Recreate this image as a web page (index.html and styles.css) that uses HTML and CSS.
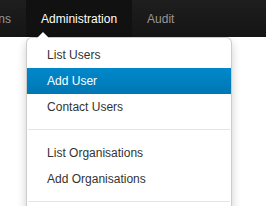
FILE: index.html
```html
<!DOCTYPE html>
<html lang="en">

<head>
    <meta charset="UTF-8">
    <meta name="viewport" content="width=device-width, initial-scale=1.0">
    <title>Administration</title>
    <link rel="stylesheet" href="styles.css">
</head>

<body>
    <!-- top navbar -->
    <div class="navbar">
        <ul class="nav">
            <li><a href="#">Organisations</a></li>
            <li class="dropdown active">
                <a href="#">Administration</a>

                <!-- open dropdown -->
                <ul class="dropdown-menu">
                    <li><a href="#">List Users</a></li>
                    <li class="hover"><a href="#">Add User</a></li>
                    <li><a href="#">Contact Users</a></li>
                    <li class="divider"></li>
                    <li><a href="#">List Organisations</a></li>
                    <li><a href="#">Add Organisations</a></li>
                    <li class="divider"></li>
                </ul>
            </li>
            <li><a href="#">Audit</a></li>
        </ul>
    </div>
</body>

</html>
```

FILE: styles.css
```css
body {
    margin: 0;
    min-height: 100vh;
    overflow: hidden;
    font-family: 'Liberation Sans', Arial, sans-serif;
    font-size: 12px;
    line-height: 20px;
    color: #333;
    background: #fff;
}

/* navbar */
.navbar {
    height: 37px;
    background: linear-gradient(to bottom, #1e1e1e, #151515);
}

.nav {
    list-style: none;
    margin: 0 0 0 -78px;
    padding: 0;
    display: flex;
}

.nav > li {
    position: relative;
}

.nav > li > a {
    display: block;
    padding: 9px 15px 8px;
    color: #999;
    text-decoration: none;
    text-shadow: 0 -1px 0 rgba(0, 0, 0, 0.25);
}

.nav > li.active > a {
    color: #fff;
    background-color: #111;
}

/* dropdown */
.dropdown-menu {
    position: absolute;
    top: 37px;
    left: 0;
    width: 204px;
    margin: 0;
    padding: 4px 0 5px;
    list-style: none;
    background: #fff;
    border: 1px solid rgba(0, 0, 0, 0.2);
    border-radius: 6px;
    box-shadow: 0 5px 10px rgba(0, 0, 0, 0.2);
}

/* caret above the menu */
.dropdown-menu::before {
    content: '';
    position: absolute;
    top: -7px;
    left: 9px;
    border-left: 7px solid transparent;
    border-right: 7px solid transparent;
    border-bottom: 7px solid rgba(0, 0, 0, 0.2);
}

.dropdown-menu::after {
    content: '';
    position: absolute;
    top: -6px;
    left: 10px;
    border-left: 6px solid transparent;
    border-right: 6px solid transparent;
    border-bottom: 6px solid #fff;
}

.dropdown-menu li a {
    display: block;
    padding: 3px 20px;
    color: #333;
    text-decoration: none;
    white-space: nowrap;
}

.dropdown-menu li.hover a {
    color: #fff;
    background: linear-gradient(to bottom, #0088cc, #0077b3);
}

.dropdown-menu .divider {
    height: 1px;
    margin: 9px 1px;
    background: #e5e5e5;
    border-bottom: 1px solid #fff;
}
```
